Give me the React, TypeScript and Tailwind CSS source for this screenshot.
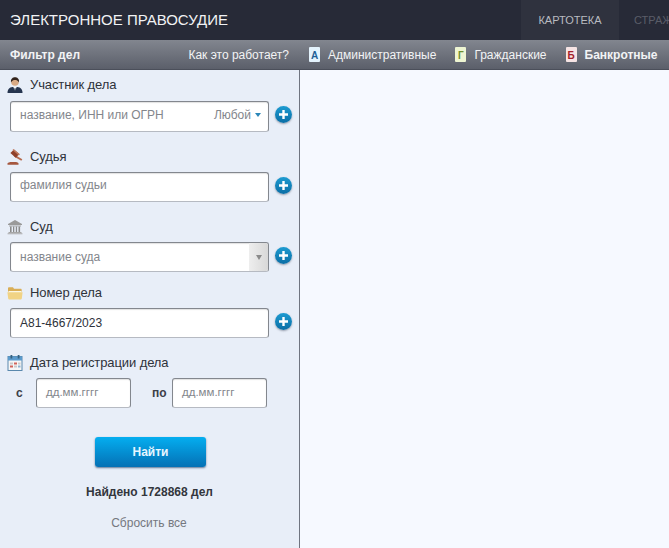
// App.tsx

function PersonIcon() {
  return (
    <svg width="16" height="16" viewBox="0 0 16 16">
      <path d="M.5 16c0-4 2-5.500 5-6h5c3 .5 5 2 5 6z" fill="#26354f" />
      <path d="M6.300 10L8 14l1.700-4z" fill="#f2f2f2" />
      <path d="M7.600 11h.8l.3 2.500-.7 1-.7-1z" fill="#26354f" />
      <circle cx="8" cy="5" r="3.800" fill="#d9aa84" />
      <path d="M4 5.500C3.500 1.600 6 .3 8 .3s4.500 1.300 4 5.200C11 3.200 9.400 3 8 3S5 3.200 4 5.500z" fill="#33241c" />
    </svg>
  )
}

function GavelIcon() {
  return (
    <svg width="16" height="16" viewBox="0 0 16 16">
      <path d="M.5 15.800h11v-1.500c-.5-.9-2-1.300-4-1.300h-3c-2 0-3.400.6-4 1.300z" fill="#a5573f" />
      <path d="M6.300 6.600l1.500 1.500 6.500 3.600 1-1.500-6.700-3.900z" fill="#b56a4e" />
      <path d="M7 .4l5.300 4.500-3.600 3.800-5.300-4.700z" fill="#8f402a" />
      <path d="M6.500 0l6.400 5.300-1 1.100-6.400-5.500z" fill="#c07a5e" />
    </svg>
  )
}

function CourtIcon() {
  return (
    <svg width="16" height="16" viewBox="0 0 16 16">
      <path d="M8 1L1 5v1h14V5z" fill="#9a9a9a" />
      <path d="M2 6.500h12v1H2zM1.500 13h13v1h-13zM.6 14.300h14.800v1H.6z" fill="#a6a6a6" />
      <path d="M3 7.500h1.600V13H3zM6 7.500h1.300V13H6zM8.800 7.500h1.300V13H8.800zM11.500 7.500h1.600V13h-1.600z" fill="#8a8a8a" />
    </svg>
  )
}

function FolderIcon() {
  return (
    <svg width="16" height="16" viewBox="0 0 16 16">
      <path d="M1 3.500C1 2.700 1.500 2.300 2 2.300h4l1 1.400h6.500c.8 0 1.200.5 1.200 1.200V7H1z" fill="#d9ae57" />
      <path d="M1.500 6h13v2h-13z" fill="#fbf6e4" />
      <path d="M.4 7.300h15.200l-.8 6.300c-.1.700-.5 1-1.100 1H2.300c-.6 0-1-.3-1.100-1z" fill="#f1d385" />
    </svg>
  )
}

function CalendarIcon() {
  return (
    <svg width="16" height="16" viewBox="0 0 16 16">
      <rect x="1" y="1.500" width="14" height="14" fill="#f6f6f6" stroke="#5a88ad" strokeWidth="1" />
      <rect x="1" y="1.500" width="14" height="4" fill="#5b9bcd" />
      <rect x="3.500" y="0" width="1.800" height="3.500" fill="#35607f" />
      <rect x="10.700" y="0" width="1.800" height="3.500" fill="#35607f" />
      <rect x="3" y="7.500" width="3" height="2" fill="#c9c9c9" />
      <rect x="7" y="7.500" width="3" height="2" fill="#d0645a" />
      <rect x="11" y="7.500" width="2.500" height="2" fill="#c9c9c9" />
      <rect x="3" y="10.500" width="3" height="2" fill="#d0645a" />
      <rect x="7" y="10.500" width="3" height="2" fill="#c9c9c9" />
      <rect x="11" y="10.500" width="2.500" height="2" fill="#8fb2cf" />
    </svg>
  )
}

function PlusButton() {
  return (
    <span className="mb-[4px] ml-[6px] flex h-[17px] w-[17px] shrink-0 items-center justify-center rounded-full bg-gradient-to-b from-[#1d9bd1] to-[#0a6ea6] shadow-[0_1px_2px_rgba(90,100,120,0.6)]">
      <svg width="9" height="9" viewBox="0 0 9 9">
        <path d="M3.300 0h2.400v3.300H9v2.400H5.700V9H3.300V5.700H0V3.300h3.300z" fill="#fff" />
      </svg>
    </span>
  )
}

function DocIcon({ letter, color, tint }: { letter: string; color: string; tint: string }) {
  return (
    <span
      className={`flex h-[15px] w-[11px] items-end justify-center rounded-[1px] pb-px text-[10px] leading-[10px] font-bold ${tint}`}
      style={{ color }}
    >
      {letter}
    </span>
  )
}

function Label({ icon, text, className }: { icon: React.ReactNode; text: string; className: string }) {
  return (
    <div className={`flex h-4 items-center pl-[7px] ${className}`}>
      <span className="w-[23px] shrink-0">{icon}</span>
      <span className="text-[13px] leading-4 tracking-[-0.1px] text-[#2e323a]">{text}</span>
    </div>
  )
}

const boxClass =
  'flex items-center rounded-[3px] border border-[#83878e] border-b-[#b6bac2] bg-white shadow-[inset_0_1px_1px_rgba(0,0,0,0.12)]'

export default function App() {
  return (
    <div className="flex h-[548px] w-[669px] flex-col overflow-hidden bg-[#f6f9ff] font-['Liberation_Sans',sans-serif]">
      {/* верхняя полоса */}
      <header className="flex h-10 shrink-0 items-center bg-[#272a37]">
        <div className="w-[521px] shrink-0 pl-[10px] text-[15px] text-[#f1f2f4]">ЭЛЕКТРОННОЕ ПРАВОСУДИЕ</div>
        <div className="flex h-full w-[98px] shrink-0 items-center justify-center bg-[#2f323e] text-[11px] text-[#b9bbc0]">КАРТОТЕКА</div>
        <div className="overflow-hidden whitespace-nowrap pl-[15px] text-[11px] text-[#5a5d68]">СТРАЖ</div>
      </header>

      <div className="flex h-[30px] shrink-0 items-center border-b border-[#4b4f5a] bg-gradient-to-b from-[#82868f] to-[#5b5f6a]">
        <div className="flex w-[299px] items-center justify-between pr-[10px] pl-[10px]">
          <span className="text-[12px] font-bold text-[#f2f3f5]">Фильтр дел</span>
          <span className="text-[12px] text-[#f2f3f5]">Как это работает?</span>
        </div>
        <div className="flex items-center whitespace-nowrap pl-[10px] text-[12px] text-[#f2f3f5]">
          <DocIcon letter="А" color="#1d5f97" tint="bg-[#e4f3fd]" />
          <span className="ml-2">Административные</span>
          <span className="ml-[19px]"><DocIcon letter="Г" color="#6f8f2f" tint="bg-[#eef5d2]" /></span>
          <span className="ml-2">Гражданские</span>
          <span className="ml-[19px]"><DocIcon letter="Б" color="#a3202a" tint="bg-[#f6e4e4]" /></span>
          <span className="ml-2 font-bold">Банкротные</span>
        </div>
      </div>

      <div className="flex min-h-0 flex-1">
        <aside className="flex w-[300px] shrink-0 flex-col border-r border-[#6f7480] bg-[#e8eef8]">
          <Label icon={<PersonIcon />} text="Участник дела" className="mt-[7px]" />
          <div className="mt-[8px] flex items-center">
            <div className={`${boxClass} ml-[10px] h-[31px] w-[259px] justify-between pr-[7px] pb-1 pl-[9px] text-[12px] text-[#83868c]`}>
              <span>название, ИНН или ОГРН</span>
              <span className="flex items-center gap-1">
                Любой
                <span className="h-0 w-0 border-x-[3.5px] border-t-4 border-x-transparent border-t-[#2b86b8]" />
              </span>
            </div>
            <PlusButton />
          </div>

          <Label icon={<GavelIcon />} text="Судья" className="mt-[17px]" />
          <div className="mt-[7px] flex items-center">
            <div className={`${boxClass} ml-[10px] h-[30px] w-[259px] pb-1 pl-[9px] text-[12px] text-[#83868c]`}>фамилия судьи</div>
            <PlusButton />
          </div>

          <Label icon={<CourtIcon />} text="Суд" className="mt-[17px]" />
          <div className="mt-[7px] flex items-center">
            <div className={`${boxClass} ml-[10px] h-[30px] w-[259px] overflow-hidden pl-[9px] text-[12px] text-[#83868c]`}>
              <span className="flex-1">название суда</span>
              <span className="flex h-full w-[19px] items-center justify-center bg-gradient-to-r from-[#eeeeee] to-[#d8d8d8]">
                <span className="h-0 w-0 border-x-[3.500px] border-t-[5px] border-x-transparent border-t-[#8a8a8a]" />
              </span>
            </div>
            <PlusButton />
          </div>

          <Label icon={<FolderIcon />} text="Номер дела" className="mt-[13px]" />
          <div className="mt-[7px] flex items-center">
            <div className={`${boxClass} ml-[10px] h-[30px] w-[259px] pl-[9px] text-[12px] text-[#2e323a]`}>А81-4667/2023</div>
            <PlusButton />
          </div>

          <Label icon={<CalendarIcon />} text="Дата регистрации дела" className="mt-[17px]" />
          <div className="mt-[7px] flex items-center text-[12px]">
            <span className="ml-4 w-5 font-bold text-[#3c4048]">с</span>
            <div className={`${boxClass} h-[30px] w-[95px] pl-[9px] text-[11.5px] text-[#83868c]`}>дд.мм.гггг</div>
            <span className="ml-[21px] w-5 font-bold text-[#3c4048]">по</span>
            <div className={`${boxClass} h-[30px] w-[95px] pl-[9px] text-[11.5px] text-[#83868c]`}>дд.мм.гггг</div>
          </div>

          <button className="mt-[29px] ml-[95px] h-[30px] w-[111px] rounded-[3px] bg-gradient-to-b from-[#05aef0] to-[#0571b5] text-[12px] font-bold text-[#e8f6ff] shadow-[0_1px_2px_rgba(40,70,110,0.7)]">
            Найти
          </button>
          <div className="mt-[16px] text-center text-[12px] font-bold text-[#33363d]">Найдено 1728868 дел</div>
          <div className="mt-[13px] pr-px text-center text-[12px] text-[#75787f]">Сбросить все</div>
        </aside>
        <main className="flex-1 bg-[#f6f9ff]" />
      </div>
    </div>
  )
}
